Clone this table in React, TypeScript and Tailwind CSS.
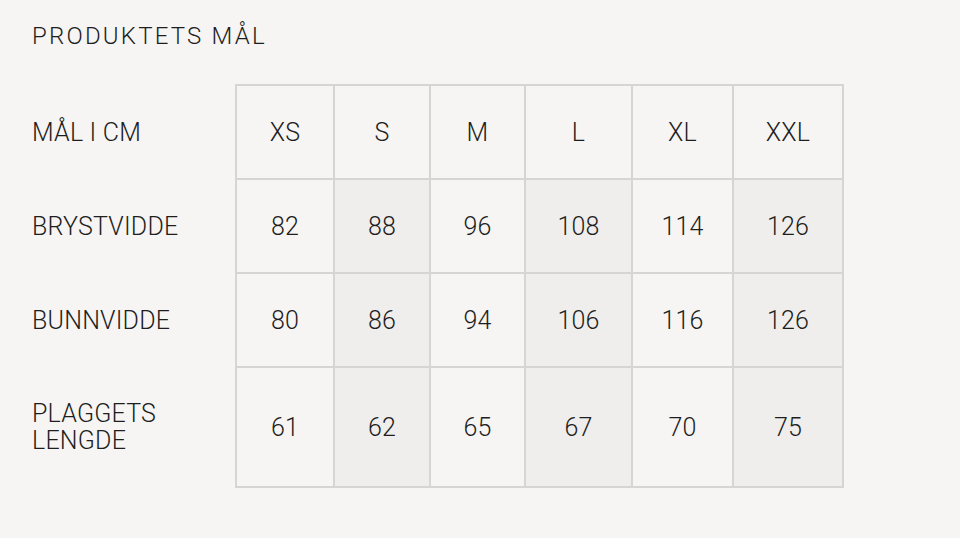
import React from 'react';

const SIZES = ['XS', 'S', 'M', 'L', 'XL', 'XXL'];

const ROWS: { label: string[]; values: number[]; tall?: boolean }[] = [
    { label: ['BRYSTVIDDE'], values: [82, 88, 96, 108, 114, 126] },
    { label: ['BUNNVIDDE'], values: [80, 86, 94, 106, 116, 126] },
    { label: ['PLAGGETS', 'LENGDE'], values: [61, 62, 65, 67, 70, 75], tall: true },
];

// column widths measured border-to-border
const COL_W = ['w-[98px]', 'w-[96px]', 'w-[95px]', 'w-[107px]', 'w-[101px]', 'w-[110px]'];

const App: React.FC = () => {
    return (
        <div className="w-[960px] h-[538px] bg-[#f6f5f3] text-[#1e1e1e] font-['Roboto','Liberation_Sans',Arial,sans-serif] font-light pl-8 pt-[22px] overflow-hidden">
            <h1 className="text-[24px] leading-[28px] tracking-[2.2px] font-light">PRODUKTETS MÅL</h1>

            <table className="mt-[34px] border-collapse text-[25px] leading-[27px] tracking-[0.2px]">
                <thead>
                    <tr className="h-[94px]">
                        <th className="w-[204px] text-left font-light p-0">MÅL I CM</th>
                        {SIZES.map((s, i) => (
                            <th key={s} className={`${COL_W[i]} border-2 border-[#d6d5d3] font-light text-center p-0`}>
                                {s}
                            </th>
                        ))}
                    </tr>
                </thead>
                <tbody>
                    {ROWS.map((row) => (
                        <tr key={row.label.join(' ')} className={row.tall ? 'h-[120px]' : 'h-[94px]'}>
                            <td className="text-left p-0">
                                {row.label.map((l) => (
                                    <div key={l}>{l}</div>
                                ))}
                            </td>
                            {row.values.map((v, i) => (
                                <td
                                    key={i}
                                    className={`border-2 border-[#d6d5d3] text-center p-0 ${i % 2 === 1 ? 'bg-[#efeeec]' : ''}`}
                                >
                                    {v}
                                </td>
                            ))}
                        </tr>
                    ))}
                </tbody>
            </table>
        </div>
    );
};

export default App;
